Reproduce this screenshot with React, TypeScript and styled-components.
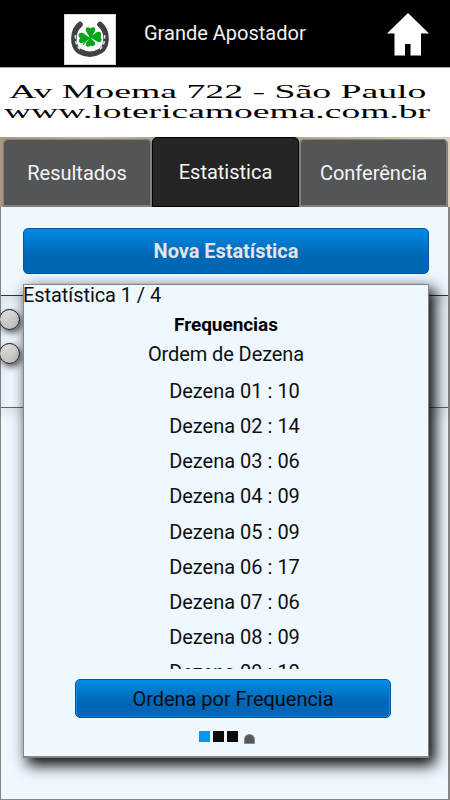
import styled, {createGlobalStyle, css} from "styled-components";


const GlobalStyle = createGlobalStyle`
    * {
        box-sizing: border-box;
    }

    body {
        margin: 0;
        background: #fff;
        font-family: Roboto, "Liberation Sans", sans-serif;
        font-size: 20px;
        color: #0c0f12;
    }
`

const SPage = styled.div`
    width: 450px;
    height: 800px;
    overflow: hidden;
    display: flex;
    flex-direction: column;
`

const SHeader = styled.header`
    height: 67px;
    flex-shrink: 0;
    background: #000;
    color: #f2f2f2;
    padding: 0 21px 0 64px;

    display: flex;
    align-items: flex-start;
`

const SLogo = styled.div`
    width: 52px;
    height: 51px;
    margin-top: 14px;
    background: #fdfdfd;
    border: 1px solid #d8d8d8;

    svg {
        display: block;
    }
`

const STitle = styled.div`
    margin: 21px 0 0 28px;
    line-height: 24px;
    white-space: nowrap;
    flex: 1;
`

const SHome = styled.svg`
    margin-top: 13px;
`

const SBanner = styled.div`
    height: 70px;
    flex-shrink: 0;
    background: #fff;
    border-top: 1px solid #aaa;
    padding-top: 14px;
    color: #000;
    font-family: "Liberation Serif", serif;
`

const SBannerLine = styled.div<{ $left: number, $stretch: number }>`
    height: 20px;
    line-height: 20px;
    font-size: 19px;
    margin-left: ${({$left}) => $left}px;
    white-space: nowrap;
    transform-origin: left center;
    transform: scaleX(${({$stretch}) => $stretch});
`

const STabs = styled.nav`
    height: 70px;
    flex-shrink: 0;
    padding: 0 2px 0 3px;
    background: linear-gradient(90deg, #a8977b, #c2b194 20%, #a9967a 50%, #c5b395 80%, #ddd0bb);

    display: grid;
    grid-template-columns: 149px 147px 149px;
    align-items: end;
`

const STab = styled.div<{ $active?: boolean }>`
    height: 68px;
    background: #545557;
    border: 1px solid #808080;
    border-bottom-width: 2px;
    border-radius: 5px 5px 0 0;
    color: #f4f4f4;

    display: flex;
    align-items: center;
    justify-content: center;

    &:first-child {
        border-right-width: 2px;
    }

    &:last-child {
        border-width: 1px 2px 2px;
    }

    ${({$active}) => $active && css`
        height: 70px;
        background: #252525;
        border: 1px solid #000;
    `}
`

const SPanel = styled.main`
    position: relative;
    flex: 1;
    background: #f0f8ff;
    border: 1px solid #858585;
    border-right-width: 2px;
    border-top: 0;
    padding-top: 21px;
`

const SButton = styled.button<{ $small?: boolean }>`
    display: block;
    width: 406px;
    height: 46px;
    margin: 0 0 0 22px;
    padding: 0;
    border: 1px solid #0651a8;
    border-radius: 5px;
    background: linear-gradient(#008ce6, #0066b5 60%, #0067b7);
    color: #e2e5e8;
    font-family: inherit;
    font-size: 20px;
    font-weight: bold;
    letter-spacing: -0.05px;

    ${({$small}) => $small && css`
        width: 316px;
        height: 39px;
        margin: 0;
        color: #020d18;
        font-weight: normal;
        letter-spacing: -0.03px;
        box-shadow: inset 1px 0 #168de2, inset -1px 0 #168de2, inset 0 -1px #087ed0;
    `}
`

const SOptions = styled.div`
    height: 113px;
    margin-top: 21px;
    padding-top: 13px;
    border-top: 1px solid #333;
    border-bottom: 1px solid #666;
    box-shadow: 0 5px 12px rgba(40, 55, 70, 0.12), inset 0 5px 12px rgba(40, 55, 70, 0.12);
`

const SRadio = styled.div`
    width: 21px;
    height: 21px;
    margin: 0 0 13px -2px;
    border: 1px solid #111;
    border-radius: 50%;
    background: linear-gradient(#dedede, #bfbfbf);
    box-shadow: 2px 3px 6px rgba(0, 0, 0, 0.65);
`

const SDialog = styled.section`
    position: absolute;
    top: 77px;
    left: 22px;
    width: 406px;
    height: 474px;
    background: #f0f8ff;
    border: 1px solid #858585;
    border-bottom-width: 2px;
    box-shadow: 5px 6px 14px 1px #000;
    text-align: center;

    display: flex;
    flex-direction: column;
`

const SCounter = styled.div`
    height: 22px;
    line-height: 21px;
    letter-spacing: -0.07px;
    margin-left: -1px;
    text-align: left;
`

const SHeading = styled.div`
    height: 34px;
    padding-top: 6px;
    line-height: 24px;
    font-size: 19px;
    font-weight: bold;
    letter-spacing: -0.05px;
    color: #000;
`

const SSubheading = styled.div`
    height: 29px;
    line-height: 26px;
    letter-spacing: -0.1px;
`

const SList = styled.div`
    height: 299px;
    padding-left: 17px;
    overflow: hidden;
`

const SRow = styled.div`
    height: 35.15px;
    padding-top: 8px;
    line-height: 26px;
    white-space: nowrap;
`

const SDialogFooter = styled.div`
    padding: 10px 0 0 51px;
`

const SPages = styled.div`
    padding: 13px 0 0 124px;

    display: flex;
    gap: 3px;
`

const SPageMark = styled.div<{ $active?: boolean }>`
    width: 11px;
    height: 11px;
    background: ${({$active}) => $active ? '#0099fa' : '#0b0b0b'};
`

const SPageDot = styled.div`
    width: 11px;
    height: 10px;
    margin: 3px 0 0 3px;
    border-radius: 6px 6px 1px 1px;
    border: 1px solid #888;
    background: #555759;
`

const frequencies = ['10', '14', '06', '09', '09', '17', '06', '09', '10']

const LogoIcon = () => (
    <svg width="50" height="49" viewBox="0 0 50 49">
        <path d="M15 9.5C7 16 7 31 14 36C21 40 29 40 35.5 36C43 31 43 16 35 9.5" fill="none"
              stroke="#414144" strokeWidth="5.5" strokeLinecap="round"/>
        <path d="M10.5 20C9.5 28 13 33 17 36M39.500 20C40.500 28 37 33 33 36" fill="none" stroke="#e5e5e5"
              strokeWidth="1.5" strokeDasharray="3.500 2.500"/>
        <g fill="#05a51a">
            <path d="M25 23L21 16C20 12 23 11.500 25.500 13.500C28 11.500 31 12 30 16L26 23Z"/>
            <path d="M25 23L18 28C14 29 13 26 15 23C12 20 14 16.500 18 18Z"/>
            <path d="M25 22L32 17C36 16 37 19 35.500 22C38 25 36 28.500 32 26.500Z"/>
            <path d="M25 22L21 28C20 32 23 33 25.500 30.500C28 32 31 30.500 30 27.500Z"/>
        </g>
        <path d="M24 22L18 30" stroke="#05a51a" strokeWidth="1.2"/>
    </svg>
)

const HomeIcon = () => (
    <SHome width="42" height="43" viewBox="0 0 42 43">
        <path d="M21 0L42 20.5H34V42.5H23.5V31H18V42.5H7.5V20.5H0Z" fill="#fff"/>
    </SHome>
)

export default function App() {
    return (<>
        <GlobalStyle/>
        <SPage>
            <SHeader>
                <SLogo><LogoIcon/></SLogo>
                <STitle>Grande Apostador</STitle>
                <HomeIcon/>
            </SHeader>
            <SBanner>
                <SBannerLine $left={9} $stretch={1.986}>Av Moema 722 - São Paulo</SBannerLine>
                <SBannerLine $left={4} $stretch={1.976}>www.lotericamoema.com.br</SBannerLine>
            </SBanner>
            <STabs>
                <STab>Resultados</STab>
                <STab $active>Estatistica</STab>
                <STab>Conferência</STab>
            </STabs>
            <SPanel>
                <SButton>Nova Estatística</SButton>
                <SOptions>
                    <SRadio/>
                    <SRadio/>
                </SOptions>
                <SDialog>
                    <SCounter>Estatística 1 / 4</SCounter>
                    <SHeading>Frequencias</SHeading>
                    <SSubheading>Ordem de Dezena</SSubheading>
                    <SList>
                        {frequencies.map((value, index) => (
                            <SRow key={index}>Dezena 0{index + 1} : {value}</SRow>
                        ))}
                    </SList>
                    <SDialogFooter>
                        <SButton $small>Ordena por Frequencia</SButton>
                        <SPages>
                            <SPageMark $active/>
                            <SPageMark/>
                            <SPageMark/>
                            <SPageDot/>
                        </SPages>
                    </SDialogFooter>
                </SDialog>
            </SPanel>
        </SPage>
    </>)
}
